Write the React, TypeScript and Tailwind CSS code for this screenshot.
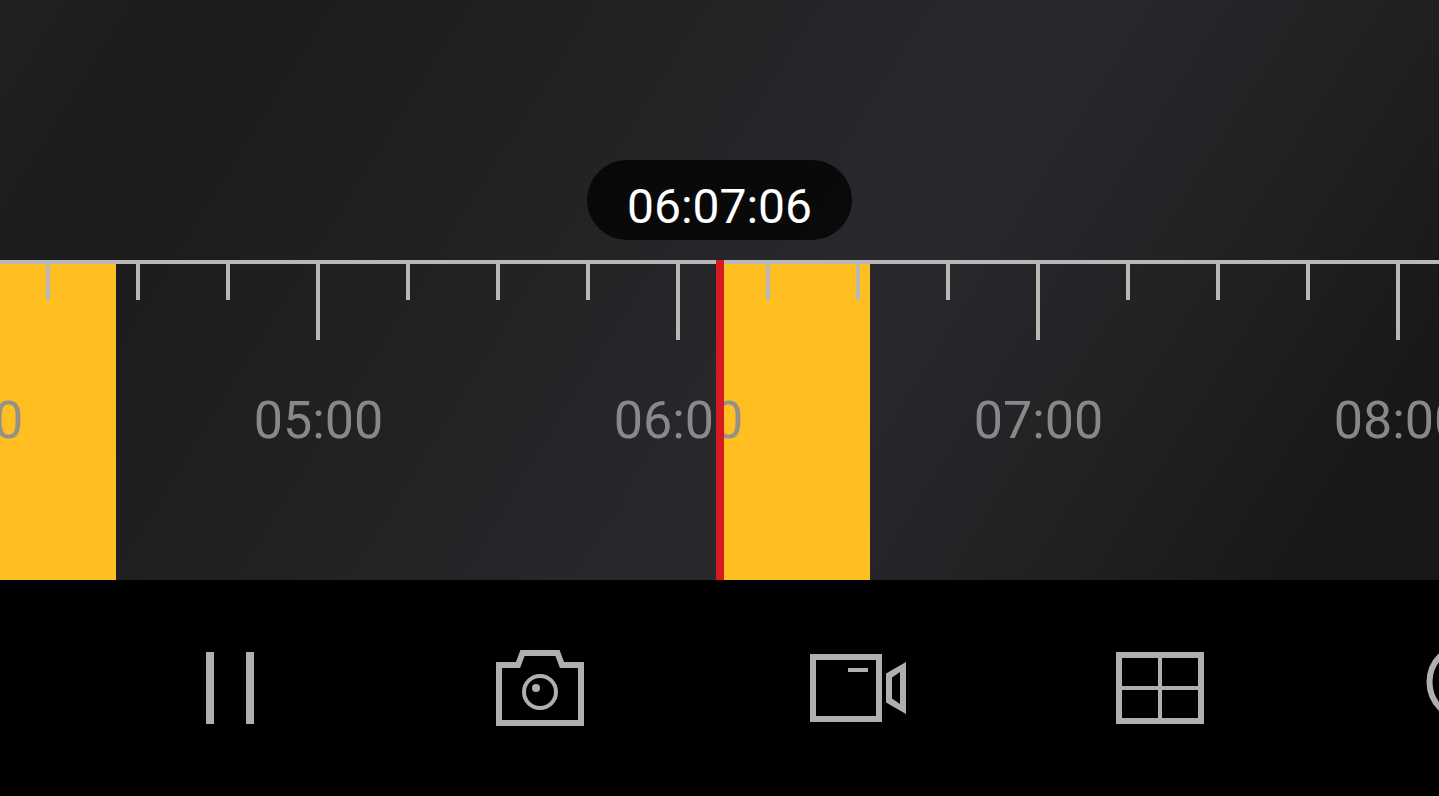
import React, { useState } from 'react';

interface Recording {
  start: number;
  end: number;
}

// All times are seconds since midnight, 360px per hour
const PX_PER_SECOND = 0.1;
const STRIP_START = 12600;
const CURRENT_TIME = 22026;

const HOURS = ['04:00', '05:00', '06:00', '07:00', '08:00'];

const RECORDINGS: Recording[] = [
  { start: 12600, end: 15980 },
  { start: 22020, end: 23520 },
];

const toPx = (time: number) => Math.floor((time - STRIP_START) * PX_PER_SECOND);

const formatTime = (time: number) =>
  [Math.floor(time / 3600), Math.floor(time / 60) % 60, time % 60]
    .map(part => String(part).padStart(2, '0'))
    .join(':');

function Timeline() {
  return (
    <div className="h-80 overflow-hidden border-t-4 border-[#b8b8b8]">
      <div
        className="relative -mt-1 h-80 w-[1800px]"
        style={{ marginLeft: `calc(50% - ${toPx(CURRENT_TIME)}px)` }}
      >
        {/* Recorded footage */}
        {RECORDINGS.map(recording => (
          <div
            key={recording.start}
            className="absolute top-1 bottom-0 bg-[#ffbe21]"
            style={{
              left: toPx(recording.start),
              width: toPx(recording.end) - toPx(recording.start),
            }}
          />
        ))}

        {/* Ticks and labels */}
        <div className="relative flex flex-col">
          <div className="flex h-20 pt-1 pl-[178px]">
            {HOURS.map(hour => (
              <div key={hour} className="flex w-[360px] shrink-0">
                <div className="h-19 w-[90px] border-l-4 border-[#b8b8b4]" />
                <div className="h-9 w-[90px] border-l-4 border-[#b8b8b4]" />
                <div className="h-9 w-[90px] border-l-4 border-[#b8b8b4]" />
                <div className="h-9 w-[90px] border-l-4 border-[#b8b8b4]" />
              </div>
            ))}
          </div>
          <div className="mt-[51px] flex pl-px">
            {HOURS.map(hour => (
              <span
                key={hour}
                className="w-[360px] shrink-0 text-center text-[52px] leading-[60px] text-[#8e8e8e]/95"
              >
                {hour}
              </span>
            ))}
          </div>
        </div>
      </div>
    </div>
  );
}

function PauseIcon() {
  return (
    <svg viewBox="0 0 120 120" className="size-30" fill="#afafaf">
      <rect x="36" y="24" width="8" height="72" />
      <rect x="76" y="24" width="8" height="72" />
    </svg>
  );
}

function CameraIcon() {
  return (
    <svg viewBox="0 0 120 120" className="size-30" fill="none" stroke="#afafaf">
      <path d="M19 37H38L42.500 25H77.500L82 37H101V95H19Z" strokeWidth="6" />
      <circle cx="60" cy="64" r="16" strokeWidth="4" />
      <circle cx="56" cy="60" r="4" fill="#afafaf" stroke="none" />
    </svg>
  );
}

function VideoIcon() {
  return (
    <svg viewBox="0 0 120 120" className="size-30" fill="#afafaf">
      <rect x="23" y="29" width="66" height="62" fill="none" stroke="#afafaf" strokeWidth="6" />
      <rect x="58" y="40" width="20" height="4" />
      <path
        fillRule="evenodd"
        d="M96 45.500L116 34V86L96 74.500ZM102 49.500V70.500L110 76V44Z"
      />
    </svg>
  );
}

function GridIcon() {
  return (
    <svg viewBox="0 0 120 120" className="size-30" fill="none" stroke="#afafaf">
      <rect x="19" y="27" width="82" height="66" strokeWidth="6" />
      <path d="M60 27V93M19 60H101" strokeWidth="4" />
    </svg>
  );
}

function SearchIcon() {
  return (
    <svg viewBox="0 0 120 120" className="size-30" fill="none" stroke="#afafaf" strokeWidth="6">
      <circle cx="56" cy="54" r="36.500" />
      <path d="M82 80L103 101" />
    </svg>
  );
}

export default function App() {
  const [playing, setPlaying] = useState(true);

  const controls = [
    { label: 'Pause', icon: <PauseIcon />, onClick: () => setPlaying(!playing) },
    { label: 'Take snapshot', icon: <CameraIcon /> },
    { label: 'Record video', icon: <VideoIcon /> },
    { label: 'Grid view', icon: <GridIcon /> },
    { label: 'Zoom', icon: <SearchIcon /> },
  ];

  return (
    <div className="min-h-screen overflow-hidden bg-black font-[Roboto,sans-serif]">
      <main className="relative bg-[linear-gradient(122deg,#212122_0%,#1b1b1c_11%,#202021_30%,#28272c_55%,#28272c_62%,#202022_79%,#18181a_92%,#18181a_100%)] pt-40">
        <div className="mb-5 flex justify-center">
          <time className="h-20 rounded-full bg-black/75 px-10 pt-3.5 text-5xl leading-[66px] text-white">
            {formatTime(CURRENT_TIME)}
          </time>
        </div>
        <Timeline />
        {/* Playhead */}
        <div className="absolute inset-x-0 bottom-0 flex h-80 justify-center">
          <div className="w-2 bg-[#d71920]" />
        </div>
      </main>

      <nav aria-label="Playback controls" className="flex h-54 items-center overflow-hidden pl-[75px]">
        {controls.map(control => (
          <button
            key={control.label}
            type="button"
            aria-label={control.label}
            onClick={control.onClick}
            className="flex w-[310px] shrink-0 justify-center"
          >
            {control.icon}
          </button>
        ))}
      </nav>
    </div>
  );
}
